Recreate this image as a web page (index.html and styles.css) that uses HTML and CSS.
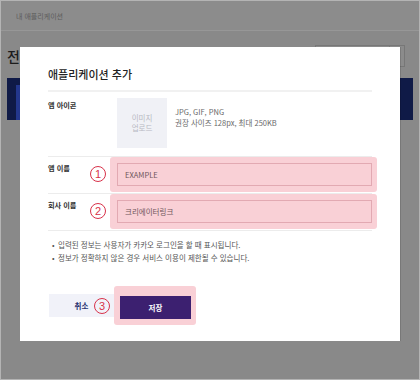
FILE: index.html
```html
<!DOCTYPE html>
<html lang="ko">
<head>
<meta charset="utf-8">
<title>애플리케이션 추가</title>
<link rel="stylesheet" href="styles.css">
</head>
<body>
<div class="screen">
  <header class="topbar"><span class="crumb">내 애플리케이션</span></header>
  <div class="toolbar">
    <h2 class="page-title">전체</h2>
    <div class="select"><span class="select-value"></span><span class="select-arrow"></span></div>
  </div>
  <div class="banner"><div class="banner-inner"></div></div>

  <div class="modal">
    <h1 class="modal-title">애플리케이션 추가</h1>

    <div class="row row-icon">
      <div class="label-cell"><span class="label">앱 아이콘</span></div>
      <div class="icon-upload">이미지<br>업로드</div>
      <div class="icon-info">JPG, GIF, PNG<br>권장 사이즈 128px, 최대 250KB</div>
    </div>

    <div class="row">
      <div class="label-cell"><span class="label">앱 이름</span><span class="mark">1</span></div>
      <div class="highlight field-wrap"><div class="input">EXAMPLE</div></div>
    </div>

    <div class="row">
      <div class="label-cell"><span class="label">회사 이름</span><span class="mark">2</span></div>
      <div class="highlight field-wrap"><div class="input">크리에이터링크</div></div>
    </div>

    <ul class="notes">
      <li>입력된 정보는 사용자가 카카오 로그인을 할 때 표시됩니다.</li>
      <li>정보가 정확하지 않은 경우 서비스 이용이 제한될 수 있습니다.</li>
    </ul>

    <div class="actions">
      <button class="btn btn-cancel">취소<span class="mark mark-over">3</span></button>
      <div class="highlight save-wrap"><button class="btn btn-save">저장</button></div>
    </div>
  </div>
</div>
</body>
</html>
```

FILE: styles.css
```css
* { box-sizing: border-box; }

html, body {
  margin: 0;
  padding: 0;
}

body {
  width: 420px;
  height: 380px;
  overflow: hidden;
  font-family: "Noto Sans CJK KR", "Noto Sans", sans-serif;
  background: #898989;
}

.screen {
  position: relative;
  width: 420px;
  height: 380px;
  border: 1px solid #b4b4b4;
  background: #898989;
  overflow: hidden;
}

.topbar {
  height: 30px;
  border-bottom: 1px solid #979797;
  background: #8c8c8c;
  display: flex;
  align-items: center;
  padding-left: 15px;
}

.crumb {
  font-size: 7px;
  color: #5c5c5c;
}

.toolbar {
  height: 46px;
  padding: 4px 14px 0 6px;
  display: flex;
  align-items: center;
  justify-content: space-between;
}

.page-title {
  margin: 0;
  font-size: 14px;
  font-weight: 500;
  color: #1c1c1c;
}

.select {
  width: 90px;
  height: 22px;
  border: 1px solid #777;
  background: #8b8b8b;
  display: flex;
}

.select-value {
  flex: 1;
  border-right: 1px solid #7c7c7c;
}

.select-arrow {
  width: 14px;
  display: flex;
  align-items: center;
  justify-content: center;
}

.select-arrow::before {
  content: "";
  border-left: 3px solid transparent;
  border-right: 3px solid transparent;
  border-top: 3px solid #1e2430;
}

.banner {
  margin: 1px 6px 0;
  height: 42px;
  background: #0f1a47;
  padding: 7px 0 0 9px;
}

.banner-inner {
  width: 30px;
  height: 35px;
  background: #23378d;
}

/* modal */
.modal {
  position: absolute;
  left: 19px;
  top: 46px;
  width: 380px;
  height: 294px;
  background: #fff;
  padding: 20px 28px 0 28px;
  box-shadow: 1px 0 0 rgba(0, 0, 0, 0.12);
}

.modal-title {
  margin: 0;
  font-size: 11px;
  line-height: 14px;
  font-weight: 500;
  color: #222;
  padding-bottom: 9px;
  border-bottom: 2px solid #f1f1f1;
}

.row {
  display: flex;
  border-bottom: 1px solid #ececec;
  padding-bottom: 1px;
}

.row-icon {
  padding: 6px 0 8px;
}

.label-cell {
  width: 62px;
  flex: none;
  display: flex;
  justify-content: space-between;
  align-items: flex-start;
  padding-right: 4px;
}

.label {
  font-size: 7.2px;
  line-height: 10px;
  font-weight: 700;
  color: #333;
  padding-top: 6px;
}

.row-icon .label {
  padding-top: 2px;
}

.mark {
  width: 16px;
  height: 16px;
  margin-top: 9px;
  border: 1px solid #d8324a;
  border-radius: 50%;
  color: #d8324a;
  font-family: "Liberation Sans", sans-serif;
  font-size: 11px;
  line-height: 14px;
  text-align: center;
}

.icon-upload {
  width: 50px;
  height: 50px;
  margin-left: 7px;
  background: #f0f1f6;
  color: #b8b9c3;
  font-size: 7.5px;
  line-height: 10px;
  display: flex;
  align-items: center;
  justify-content: center;
  text-align: center;
}

.icon-info {
  margin-left: 8px;
  padding-top: 8px;
  font-size: 7.5px;
  line-height: 11px;
  color: #6a6a6a;
}

.highlight {
  background: #f9d0d6;
  border-radius: 3px;
}

.field-wrap {
  flex: 1;
  margin-right: -5px;
  padding: 6px 5px 6px 7px;
}

.input {
  height: 23px;
  border: 1px solid #e2a9b2;
  padding-left: 7px;
  font-size: 7.5px;
  color: #6e555a;
  display: flex;
  align-items: center;
}

.notes {
  list-style: none;
  margin: 8px 0 0;
  padding: 0 0 0 4px;
  font-size: 7.5px;
  line-height: 12.5px;
  color: #555;
}

.notes li::before {
  content: "•";
  display: inline-block;
  width: 6px;
}

.actions {
  margin-top: 22px;
  display: flex;
  align-items: center;
}

.btn {
  font-family: inherit;
  font-size: 7.5px;
  font-weight: 700;
  height: 23px;
  border: 0;
  padding: 0;
}

.btn-cancel {
  position: relative;
  width: 65px;
  margin-left: 1px;
  background: #f1f2f9;
  color: #2a3573;
}

.mark-over {
  position: absolute;
  right: 4px;
  top: 3.5px;
  margin-top: 0;
  font-weight: 400;
}

.save-wrap {
  padding: 6px 5px 6px 6px;
}

.btn-save {
  width: 71px;
  background: #3c2070;
  color: #fff;
}
```
